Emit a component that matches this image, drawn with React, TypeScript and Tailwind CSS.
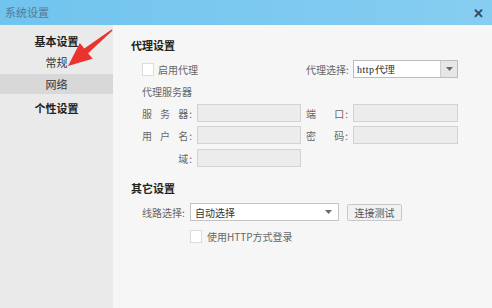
import React from "react";

const Caret = () => (
  <svg width="7" height="4" viewBox="0 0 7 4" className="block">
    <path d="M0 0 L7 0 L3.5 4 Z" fill="#6b6b6b" />
  </svg>
);

const Check = () => (
  <div className="w-[12px] h-[13px] bg-white border border-[#dcdcdc]" />
);

// label whose characters spread over a fixed width, like "服 务 器:"
const SpreadLabel = ({ chars, width }: { chars: string[]; width: string }) => (
  <div className={`flex items-center ${width} pr-[5px]`}>
    <div className={`flex flex-1 ${chars.length > 1 ? "justify-between" : "justify-end"}`}>
      {chars.map((c, i) => (
        <span key={i}>{c}</span>
      ))}
    </div>
    <span className="ml-[1px]">:</span>
  </div>
);

const Field = ({ width }: { width: string }) => (
  <div className={`${width} h-[18px] bg-[#ececec] border border-[#d2d2d2]`} />
);

export default function App() {
  return (
    <div className="relative w-[492px] h-[308px] overflow-hidden font-['Noto_Sans_CJK_SC',sans-serif] bg-[#f6f6f6]">
      {/* title bar */}
      <div className="h-[25px] flex items-center justify-between px-[5px] bg-gradient-to-r from-[#70c4ee] to-[#86cdf1]">
        <span className="text-[11px] text-[#557b96]">系统设置</span>
        <span className="text-[13px] font-bold text-[#2e4b5f] mr-[3px] leading-none">✕</span>
      </div>

      <div className="flex h-[283px]">
        {/* sidebar */}
        <div className="w-[113px] bg-[#eaeaea] pt-[5px] text-[11px] text-[#333]">
          <div className="h-[22px] flex items-center justify-center font-bold text-[#222]">基本设置</div>
          <div className="h-[21px] flex items-center justify-center">常规</div>
          <div className="h-[20px] mt-[1px] flex items-center justify-center bg-[#d8d8d8]">网络</div>
          <div className="h-[22px] mt-[3px] flex items-center justify-center font-bold text-[#222]">个性设置</div>
        </div>

        {/* content */}
        <div className="flex-1 pl-[18px] pt-[13px] text-[10px] text-[#666]">
          <div className="h-[14px] flex items-center text-[11px] font-bold text-[#222]">代理设置</div>

          <div className="pl-[11px]">
            <div className="mt-[8px] h-[18px] flex items-center">
              <div className="w-[164px] flex items-center">
                <Check />
                <span className="ml-[4px]">启用代理</span>
              </div>
              <div className="w-[47px]">代理选择:</div>
              <div className="w-[105px] h-[18px] flex bg-white border border-[#bdbdbd]">
                <span className="flex-1 flex items-center pl-[3px] text-[#222] text-[10px] tracking-[0.5px] font-['Liberation_Serif',serif]">
                  http代理
                </span>
                <div className="w-[17px] flex items-center justify-center bg-[#e6e6e6] border-l border-[#cfcfcf]">
                  <Caret />
                </div>
              </div>
            </div>

            <div className="mt-[6px] h-[14px] flex items-center">代理服务器</div>

            <div className="mt-[6px] flex items-center">
              <SpreadLabel chars={["服", "务", "器"]} width="w-[55px]" />
              <Field width="w-[104px]" />
              <div className="w-[5px]" />
              <SpreadLabel chars={["端", "口"]} width="w-[47px]" />
              <Field width="w-[105px]" />
            </div>
            <div className="mt-[4px] flex items-center">
              <SpreadLabel chars={["用", "户", "名"]} width="w-[55px]" />
              <Field width="w-[104px]" />
              <div className="w-[5px]" />
              <SpreadLabel chars={["密", "码"]} width="w-[47px]" />
              <Field width="w-[105px]" />
            </div>
            <div className="mt-[5px] flex items-center">
              <SpreadLabel chars={["域"]} width="w-[55px]" />
              <Field width="w-[104px]" />
            </div>
          </div>

          <div className="mt-[14px] h-[14px] flex items-center text-[11px] font-bold text-[#222]">其它设置</div>

          <div className="pl-[11px]">
            <div className="mt-[8px] flex items-center">
              <div className="w-[48px]">线路选择:</div>
              <div className="w-[149px] h-[18px] flex items-center bg-white border border-[#c4c4c4] pl-[4px] pr-[6px]">
                <span className="flex-1 text-[#333]">自动选择</span>
                <Caret />
              </div>
              <button className="ml-[8px] w-[55px] h-[17px] flex items-center justify-center bg-[#f1f1f1] border border-[#c9c9c9] rounded-[2px] text-[#555] text-[10px]">
                连接测试
              </button>
            </div>
            <div className="mt-[8px] ml-[48px] flex items-center">
              <Check />
              <span className="ml-[5px]">使用HTTP方式登录</span>
            </div>
          </div>
        </div>
      </div>

      {/* red arrow annotation */}
      <svg className="absolute inset-0 pointer-events-none" width="492" height="308">
        <polygon
          points="68,66 79.8,43.1 84.3,48.6 111.6,29.4 112.6,30.6 88.1,53.2 92.6,58.7"
          fill="#e8332f"
        />
      </svg>
    </div>
  );
}
